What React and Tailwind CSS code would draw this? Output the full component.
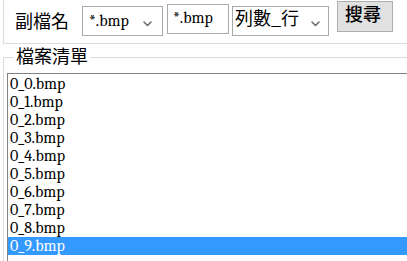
import React from "react";

function Chevron() {
  return (
    <svg width="9" height="6" viewBox="0 0 9 6" className="shrink-0">
      <path d="M1 1 L4.5 4.5 L8 1" fill="none" stroke="#707070" strokeWidth="1.6" strokeLinecap="round" strokeLinejoin="round" />
    </svg>
  );
}

export default function App() {
  const files = Array.from({ length: 10 }, (_, i) => `0_${i}.bmp`);
  return (
    <div className="w-[407px] h-[261px] overflow-hidden bg-white text-black">
      <div className="ml-[3px] w-[430px] h-[44px] border-l border-b border-[#dcdcdc] flex items-start">
        <span className="[font-family:Noto_Sans_CJK_TC,sans-serif] ml-[11px] mt-[11px] text-[18px] leading-[18px]">副檔名</span>
        <div className="ml-[13px] mt-[6px] w-[81px] h-[30px] border border-[#a9a9a9] flex items-start">
          <div className="font-serif ml-[6px] w-[41px] overflow-hidden whitespace-nowrap text-[16px] leading-[28px]">*.bmp</div>
          <div className="ml-auto mr-[10px] mt-[14px]"><Chevron /></div>
        </div>
        <div className="font-serif ml-[4px] mt-[4px] w-[62px] h-[30px] border border-[#a9a9a9] pl-[5px] pt-[1px] text-[16px] leading-[24px]">*.bmp</div>
        <div className="ml-[3px] mt-[6px] w-[97px] h-[30px] border border-[#a9a9a9] flex items-start">
          <div className="[font-family:Noto_Sans_CJK_TC,sans-serif] ml-[2px] mt-[1px] whitespace-nowrap text-[18px] leading-[18px]">列數_行</div>
          <div className="ml-auto mr-[8px] mt-[14px]"><Chevron /></div>
        </div>
        <div className="[font-family:Noto_Sans_CJK_TC,sans-serif] ml-[8px] mt-[1px] w-[56px] h-[31px] border border-[#adadad] bg-[#e1e1e1] pl-[7px] pt-[2px] text-[18px] leading-[18px] font-medium">搜尋</div>
      </div>
      <fieldset className="ml-[3px] mt-[2px] w-[430px] border-0 border-l border-t border-[#dcdcdc] p-0 m-0">
        <legend className="[font-family:Noto_Sans_CJK_TC,sans-serif] ml-[10px] px-[2px] pb-[4px] text-[18px] leading-[18px]">檔案清單</legend>
        <div className="font-serif ml-[3px] mt-[5px] h-[200px] border-l border-t border-[#828282] pt-[1px] text-[16px] leading-[18px]">
          {files.map((f, i) => (
            <div
              key={f}
              className={i === 9 ? "h-[18px] pl-[2px] bg-[#3399ff] text-white" : "h-[18px] pl-[2px]"}
            >
              {f}
            </div>
          ))}
        </div>
      </fieldset>
    </div>
  );
}
